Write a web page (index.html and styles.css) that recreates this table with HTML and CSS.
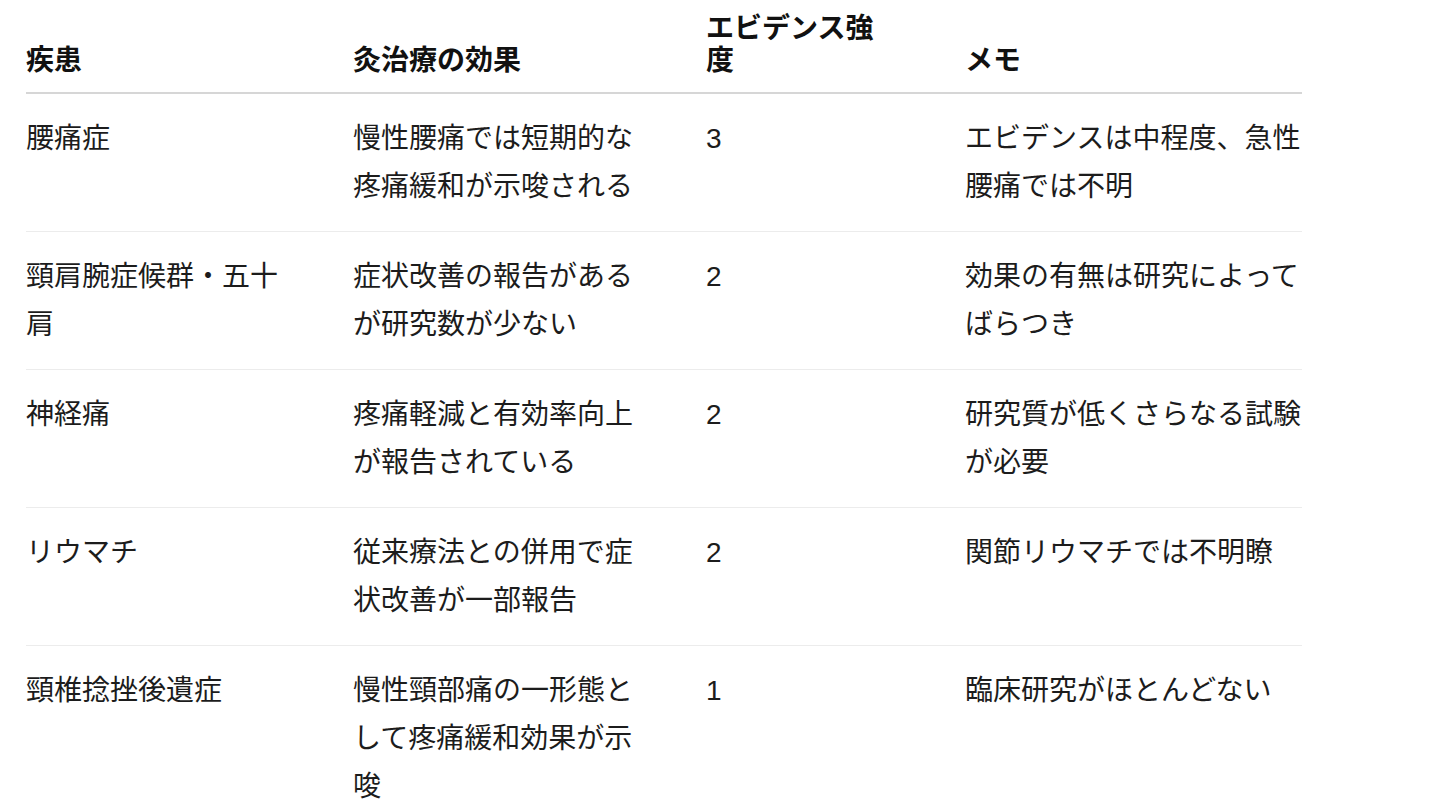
FILE: index.html
```html
<!DOCTYPE html>
<html lang="ja">
<head>
<meta charset="utf-8">
<link rel="stylesheet" href="styles.css">
</head>
<body>
<div class="page">
<table class="evidence">
  <colgroup>
    <col class="w1"><col class="w2"><col class="w3"><col class="w4">
  </colgroup>
  <thead>
    <tr>
      <th class="c1">疾患</th>
      <th class="c2">灸治療の効果</th>
      <th class="c3">エビデンス強度</th>
      <th class="c4">メモ</th>
    </tr>
  </thead>
  <tbody>
    <tr>
      <td class="c1">腰痛症</td>
      <td class="c2">慢性腰痛では短期的な疼痛緩和が示唆される</td>
      <td class="c3">3</td>
      <td class="c4">エビデンスは中程度、急性腰痛では不明</td>
    </tr>
    <tr>
      <td class="c1">頸肩腕症候群・五十肩</td>
      <td class="c2">症状改善の報告があるが研究数が少ない</td>
      <td class="c3">2</td>
      <td class="c4">効果の有無は研究によってばらつき</td>
    </tr>
    <tr>
      <td class="c1">神経痛</td>
      <td class="c2">疼痛軽減と有効率向上が報告されている</td>
      <td class="c3">2</td>
      <td class="c4">研究質が低くさらなる試験が必要</td>
    </tr>
    <tr>
      <td class="c1">リウマチ</td>
      <td class="c2">従来療法との併用で症状改善が一部報告</td>
      <td class="c3">2</td>
      <td class="c4">関節リウマチでは不明瞭</td>
    </tr>
    <tr>
      <td class="c1">頸椎捻挫後遺症</td>
      <td class="c2">慢性頸部痛の一形態として疼痛緩和効果が示唆</td>
      <td class="c3">1</td>
      <td class="c4">臨床研究がほとんどない</td>
    </tr>
  </tbody>
</table>
</div>
</body>
</html>
```

FILE: styles.css
```css
html, body {
  margin: 0;
  padding: 0;
  background: #ffffff;
}

.page {
  padding: 0 0 0 26px;
}

.evidence {
  width: 1276px;
  table-layout: fixed;
  border-collapse: collapse;
  font-family: "Liberation Sans", "Noto Sans CJK JP", sans-serif;
  font-size: 28px;
  color: #1c1c1c;
}

.w1 { width: 327px; }
.w2 { width: 353px; }
.w3 { width: 259px; }
.w4 { width: 337px; }

.evidence th {
  text-align: left;
  vertical-align: bottom;
  font-weight: 700;
  color: #111111;
  line-height: 32px;
  padding-top: 13px;
  padding-bottom: 15px;
  border-bottom: 2px solid #d6d6d6;
}

.evidence td {
  vertical-align: top;
  line-height: 48px;
  padding-top: 21px;
  padding-bottom: 20px;
  border-bottom: 1px solid #ececec;
}

.evidence tbody tr:last-child td {
  border-bottom: none;
}

.c1 { padding-left: 0; padding-right: 62px; }
.c2 { padding-left: 0; padding-right: 59px; }
.c3 { padding-left: 0; padding-right: 77px; }
.c4 { padding-left: 0; padding-right: 0; }
```
